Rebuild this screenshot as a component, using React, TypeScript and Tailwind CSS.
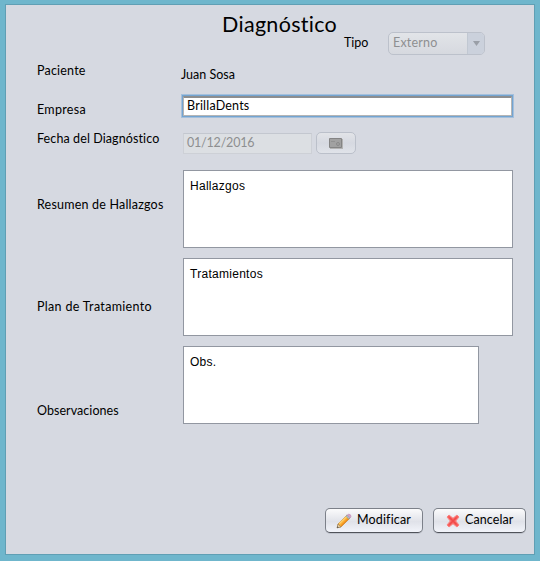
import type { ReactNode } from "react";

const fieldText = "font-['Liberation_Sans',Arial,sans-serif] text-[12px] leading-4";

function Row({ label, height, labelClass, children }: { label: string; height: string; labelClass: string; children: ReactNode }) {
  return (
    <div className={`flex items-start ${height}`}>
      <div className={`w-[145px] shrink-0 whitespace-nowrap ${labelClass}`}>{label}</div>
      {children}
    </div>
  );
}

function Area({ text, className }: { text: string; className: string }) {
  return (
    <div className={`ml-px h-[78px] border border-[#9297a1] bg-white px-1.5 pt-[7px] tracking-[0.28px] ${fieldText} ${className}`}>
      {text}
    </div>
  );
}

function Pencil() {
  return (
    <svg width="16" height="16" viewBox="0 0 16 16" className="shrink-0">
      <path d="M1.2 14.8 L2 11 L10.8 2.4 L13.8 5.3 L5 13.9 Z" fill="#fbae35" stroke="#b98743" strokeWidth=".8" />
      <path d="M3.2 10.8 L11 3.2" stroke="#ffd06a" strokeWidth="1.4" />
      <path d="M5 12.8 L13 5" stroke="#f08c1a" strokeWidth="1.1" />
      <path d="M1.2 14.8 L2 11.2 L4.9 13.9 Z" fill="#efd9b0" stroke="#8f7a5c" strokeWidth=".6" />
      <path d="M.9 15.1 L1.4 13.2 L2.9 14.6 Z" fill="#555" />
      <path d="M10 3.2 L11.3 1.9 L14.2 4.8 L12.9 6.1 Z" fill="#a9bcc8" stroke="#8799a5" strokeWidth=".5" />
      <path d="M11.3 1.9 Q12.8 .5 14.4 1.8 Q15.7 3.3 14.2 4.8 Z" fill="#d9a0cc" stroke="#b586ae" strokeWidth=".6" />
    </svg>
  );
}

function Cross() {
  return (
    <svg width="14" height="14" viewBox="0 0 14 14" className="shrink-0">
      <path
        d="M1 3 L3 1 L7 4.3 L11 1 L13 3 L9.7 7 L13 11 L11 13 L7 9.7 L3 13 L1 11 L4.3 7 Z"
        fill="#f9605e"
        stroke="#f98582"
        strokeWidth="1"
        strokeLinejoin="round"
      />
      <path d="M3.5 3.5 L10.5 10.5 M10.5 3.5 L3.5 10.5" stroke="#ef4a4a" strokeWidth="1.2" />
    </svg>
  );
}

function Action({ icon, label, className }: { icon: ReactNode; label: string; className: string }) {
  return (
    <button
      className={`flex h-[25px] items-center rounded-[5px] border border-[#7c8089] border-b-[#50535a] bg-linear-to-b from-[#fbfbfc] via-[#e0e2e9] via-55% to-[#f2f4fa] whitespace-nowrap shadow-[0_1px_0_#bfc3cc] ${className}`}
    >
      {icon}
      <span className="-mt-0.5">{label}</span>
    </button>
  );
}

export default function App() {
  return (
    <div className="h-[561px] w-[540px] bg-[#6fb6cc] pt-1 pl-[5px] font-[Lato,Carlito,sans-serif] text-[12.5px] leading-4 text-black">
      <main className="flex h-[551px] w-[530px] flex-col border border-[#609fb4] bg-[#d6d9e1] pl-[31px]">
        <header className="flex h-[52px] items-start">
          <h1 className="ml-[185px] w-[122px] pt-[5px] text-[21.5px] leading-7 tracking-[0.3px] whitespace-nowrap">Diagnóstico</h1>
          <span className="mt-[30px] w-11">Tipo</span>
          <div className="mt-[27px] flex h-[23px] w-[97px] overflow-hidden rounded-[5px] border border-[#bcc1cb] bg-linear-to-b from-[#e2e4e8] to-[#d6d9df] text-[#8e8f91]">
            <span className="flex-1 pt-[2px] pl-1 tracking-[0.2px]">Externo</span>
            <span className="flex w-[17px] items-center justify-center border-l border-[#c1c8d2] bg-[#cbd1dc]">
              <svg width="7" height="5" viewBox="0 0 7 5"><path d="M0 0H7L3.5 5Z" fill="#9a9fa7" /></svg>
            </span>
          </div>
        </header>

        <Row label="Paciente" height="h-[37px]" labelClass="pt-[6px] tracking-[0.2px]">
          <span className="-ml-px pt-[10px]">Juan Sosa</span>
        </Row>
        <Row label="Empresa" height="h-7" labelClass="pt-[8px] tracking-[0.3px]">
          <div className="-ml-px h-6 w-[333px] border border-[#a5c0dc] bg-[#73a4d1] p-px">
            <div className="h-5 border border-t-2 border-[#b5b5b5] border-t-[#8d8e8f] bg-white pl-[3px] leading-[15px] tracking-[0.2px]">BrillaDents</div>
          </div>
        </Row>
        <Row label="Fecha del Diagnóstico" height="h-12" labelClass="pt-[9px] tracking-[0.1px]">
          <div className="mt-[11px] ml-px h-[21px] w-[129px] border border-[#cdd0d6] border-t-[#c3c7cf] bg-[#dcdfe3] pl-[3px] leading-[18px] tracking-[-0.2px] text-[#8e8f91]">01/12/2016</div>
          <button className="mt-[10px] ml-1 flex h-[22px] w-10 items-center justify-center rounded-[5px] border border-[#bbc0ca] bg-linear-to-b from-[#e2e4e8] via-[#d6d9e1] to-[#e0e3e9]">
            <svg width="14" height="11" viewBox="0 0 14 11" fill="none">
              <path d="M1 1H14V11H1Z" fill="#b3b3b3" />
              <path d="M.5 .5H12.5V9.5H.5Z" fill="#a1a1a1" stroke="#848484" />
              <path d="M2 3.5H6" stroke="#919191" />
              <circle cx="9" cy="6" r="1.5" stroke="#8a8a8a" />
            </svg>
          </button>
        </Row>
        <Row label="Resumen de Hallazgos" height="h-[88px]" labelClass="pt-[27px] tracking-[0.2px]">
          <Area text="Hallazgos" className="w-[330px]" />
        </Row>
        <Row label="Plan de Tratamiento" height="h-[88px]" labelClass="pt-[41px] tracking-[0.32px]">
          <Area text="Tratamientos" className="w-[330px]" />
        </Row>
        <Row label="Observaciones" height="h-[78px]" labelClass="pt-[57px] tracking-[0.05px]">
          <Area text="Obs." className="w-[296px]" />
        </Row>

        <footer className="mt-[84px] flex justify-end gap-2.5 pr-2">
          <Action icon={<Pencil />} label="Modificar" className="w-[98px] gap-[5px] pl-2.5 tracking-[0.15px]" />
          <Action icon={<Cross />} label="Cancelar" className="w-[93px] gap-[5px] pl-3 tracking-[0.1px]" />
        </footer>
      </main>
    </div>
  );
}
